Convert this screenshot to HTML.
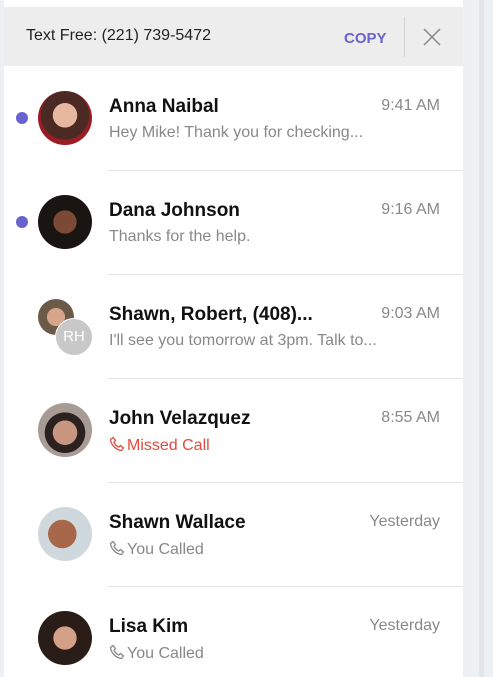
<!DOCTYPE html>
<html><head><style>
body{margin:0;width:493px;height:677px;overflow:hidden;background:#eef1f4;font-family:"Liberation Sans",sans-serif;position:relative}
.strip{position:absolute;left:479px;top:0;width:5px;height:677px;background:#e2e6ea}
.panel{position:absolute;left:4px;top:0;width:459px;height:677px;background:#fff}
.hdr{position:absolute;left:4px;top:7px;width:459px;height:59px;background:#ededed}
.hdr .t{position:absolute;left:22px;top:20px;font-size:16px;color:#222}
.hdr .c{position:absolute;left:340px;top:23px;font-size:15px;font-weight:bold;color:#6a62cf}
.hdr .d{position:absolute;left:400px;top:10px;width:1px;height:40px;background:#d4d4d4}
.dot{position:absolute;left:16px;width:12px;height:12px;border-radius:50%;background:#6a62cf}
.av{position:absolute;left:38px;width:54px;height:54px;border-radius:50%}
.nm{position:absolute;left:109px;font-size:19px;font-weight:bold;color:#111}
.tm{position:absolute;right:53px;font-size:16px;color:#888}
.sb{position:absolute;left:109px;font-size:16px;color:#888}
.sb svg{vertical-align:-2px;margin-right:2px}
.sep{position:absolute;left:108px;width:355px;height:1px;background:#e3e3e3}
</style></head><body>
<div class="strip"></div>
<div class="panel"></div>
<div class="hdr"><div class="t">Text Free: (221) 739-5472</div><div class="c">COPY</div><div class="d"></div>
<svg style="position:absolute;left:419px;top:21px" width="18" height="18"><path d="M1 1L17 17M17 1L1 17" stroke="#888" stroke-width="1.5"/></svg></div>

<div class="dot" style="top:112px"></div>
<div class="av" style="top:91px;background:radial-gradient(circle at 50% 45%,#e7b79f 0 30%,#4a2a22 31% 60%,#9b1c24 61%)"></div>
<div class="nm" style="top:96px">Anna Naibal</div><div class="tm" style="top:97px">9:41 AM</div>
<div class="sb" style="top:124px">Hey Mike! Thank you for checking...</div>
<div class="sep" style="top:170px"></div>

<div class="dot" style="top:216px"></div>
<div class="av" style="top:195px;background:radial-gradient(circle at 50% 50%,#7a4a34 0 30%,#1a1413 31%)"></div>
<div class="nm" style="top:200px">Dana Johnson</div><div class="tm" style="top:201px">9:16 AM</div>
<div class="sb" style="top:228px">Thanks for the help.</div>
<div class="sep" style="top:274px"></div>

<div class="av" style="top:299px;width:36px;height:36px;background:radial-gradient(circle at 50% 50%,#d6a58a 0 35%,#6b5a48 36%)"></div>
<div class="av" style="top:318px;left:55px;width:36px;height:36px;background:#c8c8c8;border:1px solid #fff;color:#fff;font-size:15px;text-align:center;line-height:36px">RH</div>
<div class="nm" style="top:304px">Shawn, Robert, (408)...</div><div class="tm" style="top:305px">9:03 AM</div>
<div class="sb" style="top:332px">I'll see you tomorrow at 3pm. Talk to...</div>
<div class="sep" style="top:378px"></div>

<div class="av" style="top:403px;background:radial-gradient(circle at 50% 55%,#c99781 0 30%,#2b221f 31% 50%,#a89a94 51%)"></div>
<div class="nm" style="top:408px">John Velazquez</div><div class="tm" style="top:409px">8:55 AM</div>
<div class="sb" style="top:436px;color:#e24a3d"><svg width="16" height="16" viewBox="0 0 16 16"><path d="M4 1.5L6.5 4.5 5 6.2C6 8.5 7.5 10 9.8 11L11.5 9.5 14.5 12 12.5 14.5C7 14 2 9 1.5 3.5Z" fill="none" stroke="#e24a3d" stroke-width="1.3"/></svg>Missed Call</div>
<div class="sep" style="top:482px"></div>

<div class="av" style="top:507px;background:radial-gradient(circle at 45% 50%,#a9674a 0 35%,#cfd8dc 36%)"></div>
<div class="nm" style="top:512px">Shawn Wallace</div><div class="tm" style="top:513px">Yesterday</div>
<div class="sb" style="top:540px"><svg width="16" height="16" viewBox="0 0 16 16"><path d="M4 1.5L6.5 4.5 5 6.2C6 8.5 7.5 10 9.8 11L11.5 9.5 14.5 12 12.5 14.5C7 14 2 9 1.5 3.5Z" fill="none" stroke="#888" stroke-width="1.3"/></svg>You Called</div>
<div class="sep" style="top:586px"></div>

<div class="av" style="top:611px;background:radial-gradient(circle at 50% 50%,#d5a088 0 30%,#2a1c16 31%)"></div>
<div class="nm" style="top:616px">Lisa Kim</div><div class="tm" style="top:617px">Yesterday</div>
<div class="sb" style="top:644px"><svg width="16" height="16" viewBox="0 0 16 16"><path d="M4 1.5L6.5 4.5 5 6.2C6 8.5 7.5 10 9.8 11L11.5 9.5 14.5 12 12.5 14.5C7 14 2 9 1.5 3.5Z" fill="none" stroke="#888" stroke-width="1.3"/></svg>You Called</div>
</body></html>
